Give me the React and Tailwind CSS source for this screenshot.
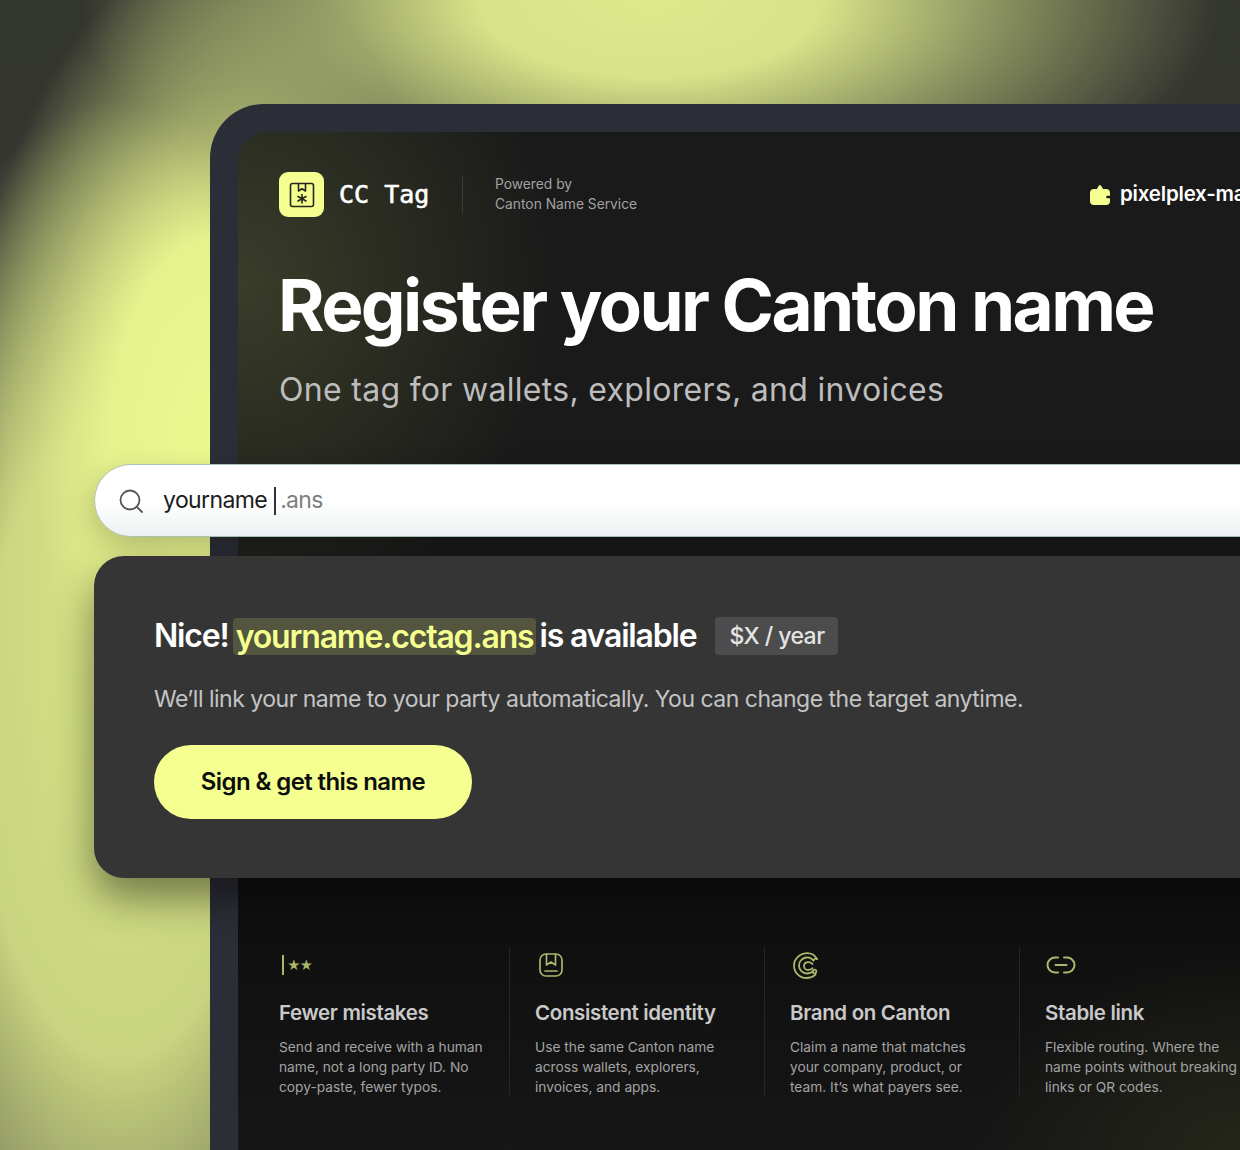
import React from "react";

const lime = "#f4ff8f";
const olive = "#aab66a";

function LogoIcon() {
  return (
    <svg width="26" height="26" viewBox="0 0 26 26" fill="none" stroke="#23261a" strokeWidth="1.600" strokeLinecap="round" strokeLinejoin="round">
      <rect x="1.500" y="1.500" width="23" height="23" rx="2" />
      <path d="M9.500 2v7l3.500-2.200L16.500 9V2" />
      <path d="M13 12.500v8.500M9 14.500l8 4.500M17 14.500l-8 4.500" />
    </svg>
  );
}

function WalletIcon() {
  return (
    <svg width="20" height="20" viewBox="0 0 20 20">
      <path fill={lime} d="M6.500 4.500L8.800.7a1.300 1.300 0 0 1 2.200 0L13.500 4.500z" />
      <rect x="0" y="4" width="20" height="16" rx="4" fill={lime} />
      <circle cx="17.500" cy="12" r="1.300" fill="#1a1a1a" />
      <rect x="18" y="10.700" width="2" height="2.600" fill="#1a1a1a" />
    </svg>
  );
}

function BoxIcon() {
  return (
    <svg width="24" height="24" viewBox="0 0 24 24" fill="none" stroke={olive} strokeWidth="1.700" strokeLinejoin="round" strokeLinecap="round">
      <rect x="1" y="1" width="22" height="22" rx="6" />
      <path d="M7.500 1.500V12l4.500-3 4.500 3V1.500" />
      <path d="M6 18h12" />
    </svg>
  );
}

function BrandIcon() {
  return (
    <svg width="27" height="27" viewBox="0 0 27 27" fill="none" stroke={olive} strokeWidth="1.800" strokeLinecap="round">
      <path d="M24 7C21.500 2.800 17.500 1 13.500 1.200 6.500 1.700 1 7 1 13.500 1 20.500 6.500 26 13.500 26c3.500 0 6.500-1.200 9-3.500" />
      <path d="M20.500 8.500C18.500 6 15.500 5 13 5.500c-4 .8-7 4-7 8 0 4.500 3.500 8 8 8 2.500 0 4.500-.8 6-2.300" />
      <path d="M24 7c-2-.8-3 .2-3.500 1.500M19.500 12c-1.300-1.500-3-2.200-5-1.800-2 .4-3.500 2-3.500 3.800 0 2.200 1.800 4 4 4 1.800 0 3.300-.6 4.500-1.800" />
      <circle cx="21.500" cy="19.500" r="1.800" />
    </svg>
  );
}

function LinkIcon() {
  return (
    <svg width="30" height="18" viewBox="0 0 30 18" fill="none" stroke={olive} strokeWidth="2" strokeLinecap="round">
      <path d="M12 1.500H9a7.500 7.500 0 0 0 0 15h3" />
      <path d="M18 1.500h3a7.500 7.500 0 0 1 0 15h-3" />
      <path d="M9.500 9h11" />
    </svg>
  );
}

function Feature({ icon, title, lines, divider }) {
  return (
    <div className={"flex shrink-0 flex-col " + (divider ? "w-[255px] border-l border-[#24262a] pl-[25px]" : "w-[230px]")}>
      <div className="mt-[2px] flex h-[32px] w-[32px] items-center justify-center">{icon}</div>
      <h3 className="mt-[18px] whitespace-nowrap text-[20.500px] font-semibold leading-[28px] tracking-[-0.35px] text-[#c9c9c9]">{title}</h3>
      <p className="mt-[10px] whitespace-nowrap text-[13.750px] leading-[20px] text-[#a3a3a3]">
        {lines.map((l) => (
          <span key={l} className="block">{l}</span>
        ))}
      </p>
    </div>
  );
}

export default function App() {
  return (
    <div
      className="h-[1150px] w-[1240px] overflow-hidden pl-[210px] pt-[104px] bg-[radial-gradient(ellipse_570px_260px_at_650px_0px,#dde98b_0%,#d7e388_30%,#bfcb7d99_62%,transparent_100%),radial-gradient(ellipse_250px_500px_at_215px_450px,#ecf88f_0%,#e6f28d_42%,#d6e28680_72%,transparent_100%),radial-gradient(ellipse_280px_640px_at_120px_740px,#d4e184_0%,#c8d47f_50%,transparent_100%),linear-gradient(#33352f,#3a3b35_70%,#6d7056)]"
      style={{ fontFamily: "Inter, 'Liberation Sans', sans-serif" }}
    >
      <div className="h-[1100px] w-[1100px] rounded-tl-[54px] bg-[#2c2e37] pl-[28px] pt-[28px]">
        <div className="h-[1100px] rounded-tl-[30px] pl-[41px] pt-[40px] bg-[radial-gradient(ellipse_320px_340px_at_0px_150px,#3a3d29_0%,transparent_100%),radial-gradient(ellipse_260px_200px_at_1000px_1020px,#24261a_0%,transparent_100%),linear-gradient(180deg,#1a1a1a_0%,#1a1a1a_55%,#0f0f0f_72%,#191919_100%)]">
          {/* Header */}
          <header className="flex h-[45px] w-[1000px] items-center">
            <div className="flex h-[45px] w-[45px] items-center justify-center rounded-[9px] bg-[#f4ff8f]">
              <LogoIcon />
            </div>
            <span className="ml-[15px] w-[123px] whitespace-nowrap text-[25px] font-normal text-white [-webkit-text-stroke:0.6px_#ffffff]" style={{ fontFamily: "'DejaVu Sans Mono', monospace" }}>CC Tag</span>
            <div className="h-[36px] border-l border-[#3b3c36]" />
            <div className="ml-[32px] mt-[-2px] w-[595px] whitespace-nowrap text-[13.800px] leading-[20px] text-[#a1a1a1]">
              <div>Powered by</div>
              <div>Canton Name Service</div>
            </div>
            <WalletIcon />
            <span className="ml-[10px] whitespace-nowrap text-[20.500px] font-semibold tracking-[-0.200px] text-white">pixelplex-main</span>
          </header>

          {/* Hero */}
          <h1 className="ml-[-1px] mt-[43px] whitespace-nowrap text-[71px] font-bold leading-[90px] tracking-[-2.620px] text-white">Register your Canton name</h1>
          <p className="mt-[18px] whitespace-nowrap text-[32px] leading-[44px] tracking-[0.300px] text-[#bdbdbd]">One tag for wallets, explorers, and invoices</p>

          {/* Search */}
          <div className="ml-[-185px] mt-[52px] flex h-[73px] w-[1300px] items-center rounded-l-[37px] border border-[#a9c2b4] bg-gradient-to-b from-white from-50% to-[#eef1f2] pl-[24px] shadow-[0_12px_30px_rgba(0,0,0,0.22)]">
            <svg width="24" height="24" viewBox="0 0 24 24" fill="none" stroke="#555" strokeWidth="1.800" strokeLinecap="round">
              <circle cx="11" cy="11" r="9.500" />
              <path d="M18 18l5 5" />
            </svg>
            <span className="ml-[20px] text-[23px] tracking-[-0.600px] text-[#1c1c1c]">yourname</span>
            <span className="ml-[7px] h-[28px] w-[2px] bg-[#333]" />
            <span className="ml-[4px] text-[23px] tracking-[-0.700px] text-[#7e7e7e]">.ans</span>
          </div>

          {/* Result panel */}
          <section className="ml-[-185px] mt-[19px] h-[322px] w-[1300px] rounded-l-[30px] bg-[#353535] pl-[60px] pt-[60px] shadow-[0_20px_40px_rgba(0,0,0,0.45)]">
            <div className="flex h-[40px] items-center whitespace-nowrap text-[32px] font-semibold tracking-[-1.180px] text-white">
              <span>Nice!</span>
              <span className="ml-[4px] rounded-[4px] bg-[#53553f] px-[3px] leading-[37px] text-[#f4ff8f]">yourname.cctag.ans</span>
              <span className="ml-[3px]">is available</span>
              <span className="ml-[19px] rounded-[4px] bg-[#4c4c4c] px-[14px] py-[4px] text-[23px] font-medium leading-[30px] tracking-[-0.550px] text-[#e4e4e4]">$X / year</span>
            </div>
            <p className="mt-[25px] whitespace-nowrap text-[23px] leading-[36px] tracking-[-0.500px] text-[#c4c4c4]">We’ll link your name to your party automatically. You can change the target anytime.</p>
            <button className="mt-[28px] h-[74px] w-[318px] rounded-full bg-[#f4ff8f] text-[24px] font-semibold tracking-[-0.600px] text-[#0d0d0d]">Sign &amp; get this name</button>
          </section>

          {/* Features */}
          <div className="mt-[69px] flex h-[150px] w-[1100px]">
            <Feature
              icon={
                <div className="ml-[4px] flex h-[22px] items-center gap-[3px]">
                  <span className="h-[20px] w-[2px] bg-[#aab66a]" />
                  <span className="text-[13px] leading-[20px] tracking-[-1.200px] text-[#aab66a]">★★</span>
                </div>
              }
              title="Fewer mistakes"
              lines={["Send and receive with a human", "name, not a long party ID. No", "copy-paste, fewer typos."]}
            />
            <Feature divider icon={<BoxIcon />} title="Consistent identity" lines={["Use the same Canton name", "across wallets, explorers,", "invoices, and apps."]} />
            <Feature divider icon={<BrandIcon />} title="Brand on Canton" lines={["Claim a name that matches", "your company, product, or", "team. It’s what payers see."]} />
            <Feature divider icon={<LinkIcon />} title="Stable link" lines={["Flexible routing. Where the", "name points without breaking", "links or QR codes."]} />
          </div>
        </div>
      </div>
    </div>
  );
}
